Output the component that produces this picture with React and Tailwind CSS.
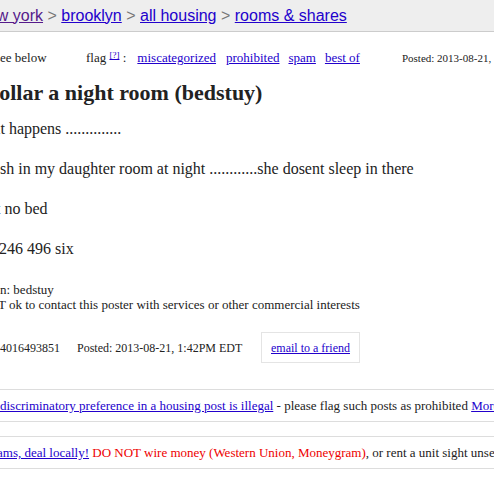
import React from 'react';

const serif = { fontFamily: '"Liberation Serif", "Times New Roman", serif' };

export default function App() {
  return (
    <div className="w-[494px] h-[494px] overflow-hidden bg-white text-[#222]" style={serif}>
      {/* breadcrumbs */}
      <div className="h-[32px] bg-[#eeeeee] border-b border-[#cccccc] flex items-center whitespace-nowrap text-[16px] font-['Liberation_Sans',Arial,sans-serif]">
        <div className="ml-[-21px] text-[#777]">
          <a className="text-[#551a8b] underline">new york</a> &gt;{' '}
          <a className="text-[#2200cc] underline">brooklyn</a> &gt;{' '}
          <a className="text-[#2200cc] underline">all housing</a> &gt;{' '}
          <a className="text-[#2200cc] underline">rooms &amp; shares</a>
        </div>
      </div>

      {/* reply / flag row */}
      <div className="mt-[16px] h-[20px] flex items-center whitespace-nowrap text-[13px]">
        <span className="ml-[-5px] w-[91px] shrink-0">see below</span>
        <span className="shrink-0">
          flag <sup className="text-[9px] text-[#2200cc] underline">[?]</sup> :
        </span>
        <a className="ml-[11px] text-[#2200cc] underline">miscategorized</a>
        <a className="ml-[10px] text-[#2200cc] underline">prohibited</a>
        <a className="ml-[9px] text-[#2200cc] underline">spam</a>
        <a className="ml-[9px] text-[#2200cc] underline">best of</a>
        <span className="ml-[42px] text-[11px]">Posted: 2013-08-21, 1:42PM EDT</span>
      </div>

      {/* title */}
      <h2 className="mt-[11px] ml-[-13px] h-[28px] leading-[28px] text-[22px] font-bold whitespace-nowrap">
        dollar a night room (bedstuy)
      </h2>

      {/* body */}
      <div className="mt-[12px] text-[16px] leading-[20px] whitespace-nowrap">
        <div className="ml-[-4px]">it happens ..............</div>
        <br />
        <div>sh in my daughter room at night ............she dosent sleep in there</div>
        <br />
        <div className="ml-[-4px]">t no bed</div>
        <br />
        <div className="ml-[-1px]">246 496 six</div>
      </div>

      {/* notices */}
      <ul className="mt-[23px] text-[13px] leading-[15px] whitespace-nowrap">
        <li>n: bedstuy</li>
        <li className="ml-[-2px]">T ok to contact this poster with services or other commercial interests</li>
      </ul>

      {/* posting info */}
      <div className="mt-[20px] flex items-center whitespace-nowrap text-[12px]">
        <span className="w-[77px] shrink-0">4016493851</span>
        <span className="w-[184px] shrink-0">Posted: 2013-08-21, 1:42PM EDT</span>
        <div className="h-[31px] px-[9px] flex items-center border border-[#e4e4e4]">
          <a className="text-[#2200cc] underline">email to a friend</a>
        </div>
      </div>

      {/* footer notices */}
      <div className="mt-[26px] border-t border-[#dddddd]" />
      <div className="h-[31px] flex items-center whitespace-nowrap text-[13px]">
        <a className="text-[#2200cc] underline">discriminatory preference in a housing post is illegal</a>
        <span>&nbsp;- please flag such posts as prohibited&nbsp;</span>
        <a className="text-[#2200cc] underline">More info</a>
      </div>
      <div className="border-t border-[#dddddd]" />
      <div className="mt-[14px] border-t border-[#dddddd]" />
      <div className="h-[31px] flex items-center whitespace-nowrap text-[13px]">
        <a className="ml-[-3px] text-[#2200cc] underline">ams, deal locally!</a>
        <span className="text-[#ee0000]">&nbsp;DO NOT wire money (Western Union, Moneygram)</span>
        <span>, or rent a unit sight unseen</span>
      </div>
      <div className="border-t border-[#dddddd]" />
    </div>
  );
}
